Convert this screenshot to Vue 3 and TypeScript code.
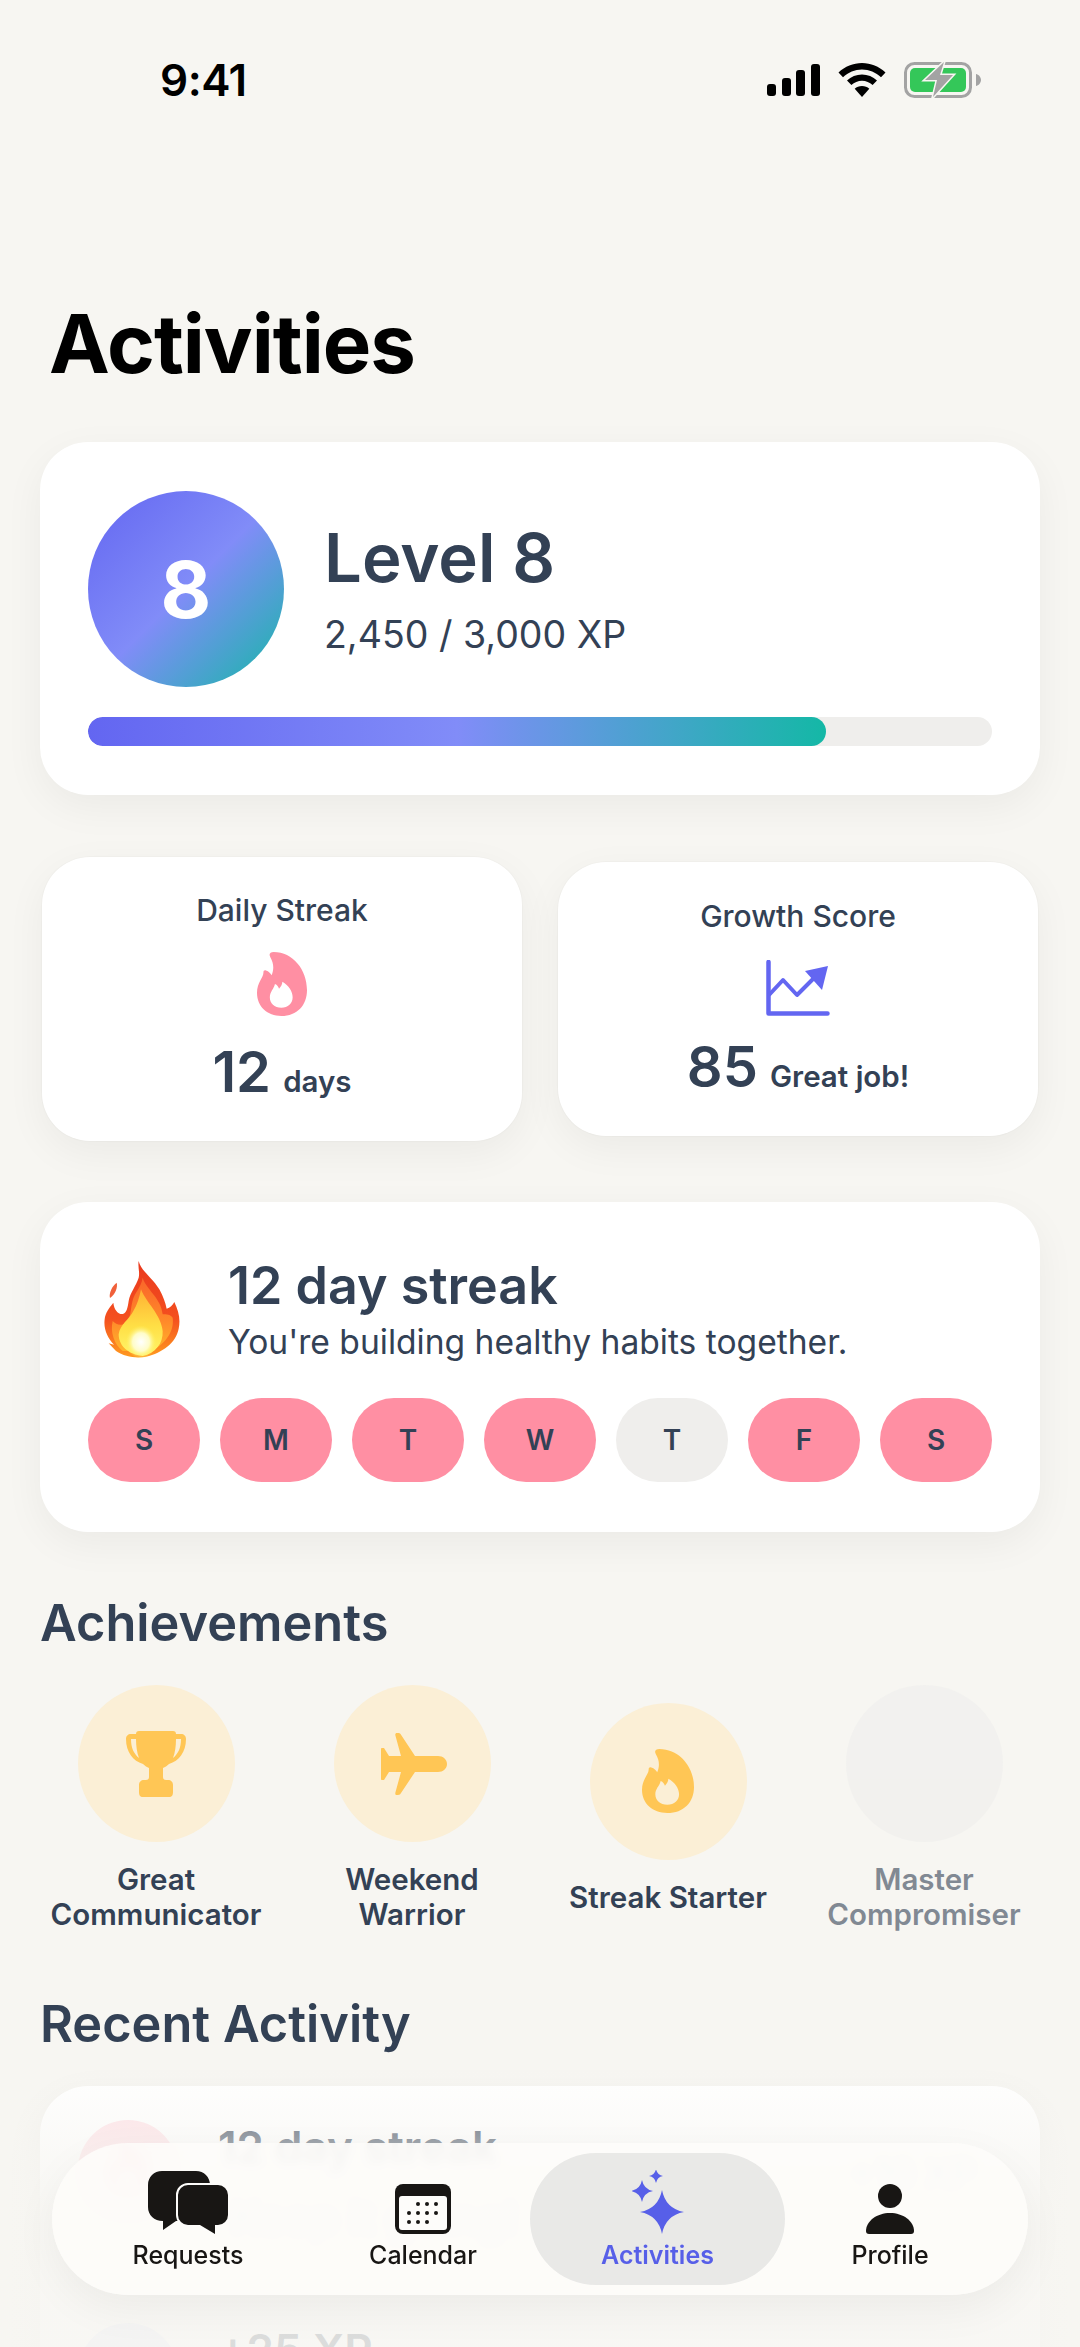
<script setup lang="ts">
interface Achievement {
  name: string[]
  icon: 'trophy' | 'plane' | 'flame' | 'none'
  locked?: boolean
}

const weekDays = [
  { label: 'S', done: true },
  { label: 'M', done: true },
  { label: 'T', done: true },
  { label: 'W', done: true },
  { label: 'T', done: false },
  { label: 'F', done: true },
  { label: 'S', done: true },
]

const achievements: Achievement[] = [
  { name: ['Great', 'Communicator'], icon: 'trophy' },
  { name: ['Weekend', 'Warrior'], icon: 'plane' },
  { name: ['Streak Starter'], icon: 'flame' },
  { name: ['Master', 'Compromiser'], icon: 'none', locked: true },
]

const flamePath =
  'M13 1c-1.4 0-2 .9-1.3 2.2 1.2 2.3 1.6 4.8.5 7.6-.5-.9-1.1-1.6-2.2-2-.7-.2-1 .2-1 .8.1 2-2.5 4.2-2.5 8.6C6.500 24 10.500 28 16 28c6.200 0 10-4.600 10-11C26 8.500 20.500 1 13 1Zm3 23.500c-2.700 0-4.500-1.900-4.500-4.400 0-2.400 1.600-3.500 2-5.600.9.400 1.300 1.100 1.600 2 .8-1 1.200-1.900 1.300-3 2.500 1.700 4 4 4 6.600 0 2.500-1.800 4.400-4.400 4.400Z'

// four-pointed star with concave sides, used by the Activities tab
function star(cx: number, cy: number, r: number): string {
  const k = r * 0.16
  return (
    `M${cx} ${cy - r}Q${cx + k} ${cy - k} ${cx + r} ${cy}` +
    `Q${cx + k} ${cy + k} ${cx} ${cy + r}` +
    `Q${cx - k} ${cy + k} ${cx - r} ${cy}` +
    `Q${cx - k} ${cy - k} ${cx} ${cy - r}Z`
  )
}
</script>

<template>
  <div class="screen">
    <div class="status-bar">
      <span class="clock">9:41</span>
      <div class="status-icons">
        <svg width="53" height="32" viewBox="0 0 53 32">
          <rect x="0" y="20" width="9" height="12" rx="3" />
          <rect x="15" y="14" width="9" height="18" rx="3" />
          <rect x="29" y="6" width="9" height="26" rx="3" />
          <rect x="44" y="0" width="9" height="32" rx="3" />
        </svg>
        <svg width="48" height="34" viewBox="0 0 48 34">
          <path d="M24 0c8.800 0 17 3.400 23.500 9.500L43 14.200C37.800 9.200 31.200 6.400 24 6.400S10.200 9.200 5 14.200L.5 9.500C7 3.400 15.200 0 24 0Z" />
          <path d="M24 11.500c5.700 0 10.900 2.200 15 6l-4.400 4.600c-2.900-2.700-6.600-4.300-10.600-4.300s-7.700 1.600-10.600 4.300L9 17.500c4.100-3.800 9.300-6 15-6Z" />
          <path d="M24 23c2.800 0 5.400 1 7.300 2.800L24 34l-7.300-8.200C18.600 24 21.200 23 24 23Z" />
        </svg>
        <svg width="77" height="36" viewBox="0 0 77 36">
          <rect x="1.500" y="1.500" width="65" height="33" rx="9" fill="none" stroke="#a3a3a3" stroke-width="3" />
          <path d="M72 12c2.500.6 5 3 5 6s-2.500 5.400-5 6Z" fill="#a3a3a3" />
          <rect x="6" y="6" width="56" height="24" rx="5" fill="#34c759" />
          <path d="M40 0 21 18h12l-4 17 20-22H36Z" fill="#a3a3a3" stroke="#f7f6f2" stroke-width="3" paint-order="stroke" />
        </svg>
      </div>
    </div>

    <h1 class="page-title">Activities</h1>

    <section class="card level-card">
      <div class="level-head">
        <div class="level-badge">8</div>
        <div class="level-text">
          <div class="level-name">Level 8</div>
          <div class="level-xp">2,450 / 3,000 XP</div>
        </div>
      </div>
      <div class="progress">
        <div class="progress-fill" :style="{ width: `${(2450 / 3000) * 100}%` }"></div>
      </div>
    </section>

    <div class="stat-row">
      <section class="card stat-card stat-streak">
        <div class="stat-label">Daily Streak</div>
        <svg class="stat-icon" width="50" height="64" viewBox="6.500 1 19.500 27" preserveAspectRatio="none">
          <path :d="flamePath" fill="#ff8fa3" fill-rule="evenodd" />
        </svg>
        <div class="stat-value">12 <small>days</small></div>
      </section>
      <section class="card stat-card stat-growth">
        <div class="stat-label">Growth Score</div>
        <svg class="stat-icon" width="64" height="56" viewBox="0 0 64 56" fill="none">
          <path d="M2.500 2v51.500h59" stroke="#6366f1" stroke-width="4.500" stroke-linecap="round" stroke-linejoin="round" />
          <path d="M3 35l14-15 14 15 17-17" stroke="#6366f1" stroke-width="4" stroke-linejoin="round" />
          <path d="M39 11 62 6l-6 24Z" fill="#6366f1" />
        </svg>
        <div class="stat-value">85 <small>Great job!</small></div>
      </section>
    </div>

    <section class="card streak-card">
      <div class="streak-head">
        <svg class="fire" width="80" height="98" viewBox="72 62 232 294">
          <defs>
            <linearGradient id="fireOuter" x1="0" y1="0" x2="0" y2="1">
              <stop offset="0" stop-color="#e9381d" />
              <stop offset=".6" stop-color="#f4501f" />
              <stop offset="1" stop-color="#ff9a1f" />
            </linearGradient>
            <linearGradient id="fireMid" x1="0" y1="0" x2="0" y2="1">
              <stop offset="0" stop-color="#f9642a" />
              <stop offset=".6" stop-color="#ff8a2a" />
              <stop offset="1" stop-color="#ffb52b" />
            </linearGradient>
            <linearGradient id="fireInner" x1="0" y1="0" x2="0" y2="1">
              <stop offset="0" stop-color="#ffb033" />
              <stop offset=".55" stop-color="#ffdf45" />
              <stop offset="1" stop-color="#fff56a" />
            </linearGradient>
            <radialGradient id="fireCore">
              <stop offset="0" stop-color="#ffffff" />
              <stop offset=".55" stop-color="#fffcc8" />
              <stop offset="1" stop-color="#fff15c" stop-opacity="0" />
            </radialGradient>
          </defs>
          <path d="M112 130c4 14-4 34-20 46-4-14 6-36 20-46Z" fill="#f0603a" />
          <path d="M178 65C185 95 215 110 240 150 252 172 258 190 262 208 272 205 280 198 285 188 298 215 304 240 298 268 290 310 250 340 200 352 170 358 135 352 110 335L88 312 104 316C85 295 72 270 76 240 78 220 90 205 102 190 104 210 115 225 130 224 142 222 145 205 148 185 152 160 170 140 178 115 182 98 175 82 178 65Z" fill="url(#fireOuter)" />
          <path d="M190 115C200 150 245 175 250 225 262 225 272 225 280 235 285 270 265 310 215 335L130 335C105 315 92 280 100 245 110 255 125 262 140 250 160 235 150 190 170 160 180 145 188 130 190 115Z" fill="url(#fireMid)" />
          <path d="M185 150C200 190 245 225 250 275 252 312 228 342 190 350 148 346 118 320 118 285 122 255 150 240 162 215 174 195 180 175 185 150Z" fill="url(#fireInner)" />
          <ellipse cx="185" cy="308" rx="46" ry="50" fill="url(#fireCore)" />
        </svg>
        <div>
          <div class="streak-title">12 day streak</div>
          <div class="streak-sub">You're building healthy habits together.</div>
        </div>
      </div>
      <div class="week">
        <div v-for="(day, i) in weekDays" :key="i" class="day" :class="{ done: day.done }">{{ day.label }}</div>
      </div>
    </section>

    <h2 class="section-title achievements-title">Achievements</h2>
    <div class="achievements">
      <div v-for="item in achievements" :key="item.name[0]" class="achievement" :class="{ locked: item.locked }">
        <div class="medal">
          <svg v-if="item.icon === 'trophy'" width="60" height="66" viewBox="0 0 60 66">
            <path d="M13 0h34c2 0 3 1 3 3h5c3 0 5 2 5 5 0 13-7 22-17 25-2 2-4 3-6 4v9c0 2 1 3 3 3h2c3 0 5 2 5 5v7c0 3-1 5-4 5H17c-3 0-4-2-4-5v-7c0-3 2-5 5-5h2c2 0 3-1 3-3v-9c-2-1-4-2-6-4C7 30 0 21 0 8c0-3 2-5 5-5h5c0-2 1-3 3-3Zm-8 8c0 9 3 15 8 19-2-5-3-12-3-19H5Zm50 0h-5c0 7-1 14-3 19 5-4 8-10 8-19Z" fill="#ffc655" fill-rule="evenodd" />
          </svg>
          <svg v-else-if="item.icon === 'plane'" class="plane" width="68" height="62" viewBox="0 0 66 62">
            <path d="M17 0c1.500 0 2.500.6 3 1.800L34 23h23c5 0 9 3.500 9 8s-4 8-9 8H34L20 60c-.5 1.200-1.500 2-3 2h-1c-1.500 0-2-1-1.600-2.500L20 39H8l-5 8H1c-.700 0-1-.5-1-1V16c0-.5.3-1 1-1h2l5 8h12L14.400 2.500C14 1 14.500 0 16 0h1Z" fill="#ffc655" />
          </svg>
          <svg v-else-if="item.icon === 'flame'" width="52" height="64" viewBox="6.500 1 19.500 27" preserveAspectRatio="none">
            <path :d="flamePath" fill="#ffc655" fill-rule="evenodd" />
          </svg>
        </div>
        <div class="achievement-name">
          <div v-for="line in item.name" :key="line">{{ line }}</div>
        </div>
      </div>
    </div>

    <h2 class="section-title">Recent Activity</h2>
    <section class="card activity-card">
      <div class="activity-row">
        <div class="activity-dot pink">
          <svg width="40" height="50" viewBox="6.500 1 19.500 27" preserveAspectRatio="none"><path :d="flamePath" fill="#ff8fa3" fill-rule="evenodd" /></svg>
        </div>
        <div class="activity-text">
          <div class="activity-title">12 day streak</div>
          <div class="activity-sub">Keep it going!</div>
        </div>
        <div class="activity-time">+10 XP</div>
      </div>
      <div class="activity-row second">
        <div class="activity-dot blue"></div>
        <div class="activity-text">
          <div class="activity-title">+25 XP</div>
        </div>
      </div>
    </section>

    <div class="scroll-fade"></div>

    <nav class="tab-bar">
      <div class="tab">
        <svg width="80" height="63" viewBox="0 0 80 63">
          <path d="M14 0h34c8 0 14 6 14 14v22c0 8-6 14-14 14H28l-13 9V50C6 50 0 44 0 36V14C0 6 6 0 14 0Z" fill="#181614" />
          <path d="M40 14h30a10 10 0 0 1 10 10v20a10 10 0 0 1-10 10h-3v9l-15-9H40a10 10 0 0 1-10-10V24a10 10 0 0 1 10-10Z" fill="#181614" stroke="#fdfcfa" stroke-width="4" paint-order="stroke" />
        </svg>
        <span>Requests</span>
      </div>
      <div class="tab">
        <svg width="56" height="50" viewBox="0 0 56 50">
          <rect x="0" y="0" width="56" height="50" rx="8" fill="#181614" />
          <rect x="4" y="12" width="48" height="34" rx="3" fill="#fdfcfa" />
          <g fill="#181614">
            <circle cx="23" cy="20" r="2" /><circle cx="32" cy="20" r="2" /><circle cx="41" cy="20" r="2" />
            <circle cx="14" cy="29" r="2" /><circle cx="23" cy="29" r="2" /><circle cx="32" cy="29" r="2" /><circle cx="41" cy="29" r="2" />
            <circle cx="14" cy="38" r="2" /><circle cx="23" cy="38" r="2" /><circle cx="32" cy="38" r="2" />
          </g>
        </svg>
        <span>Calendar</span>
      </div>
      <div class="tab active">
        <svg width="52" height="64" viewBox="0 0 52 64" fill="#575fe8">
          <path :d="star(30, 42, 22)" />
          <path :d="star(10, 21, 11)" />
          <path :d="star(24, 6, 7)" />
        </svg>
        <span>Activities</span>
      </div>
      <div class="tab">
        <svg width="48" height="50" viewBox="0 0 48 50" fill="#181614">
          <circle cx="24" cy="12" r="12" />
          <path d="M24 29C37 29 48 37 48 47c0 2-1 3-3 3H3c-2 0-3-1-3-3C0 37 11 29 24 29Z" />
        </svg>
        <span>Profile</span>
      </div>
    </nav>
  </div>
</template>

<style>
html,
body {
  margin: 0;
  background: #f7f6f2;
}
</style>

<style scoped>
.screen {
  position: relative;
  width: 1080px;
  height: 2347px;
  overflow: hidden;
  background: #f7f6f2;
  font-family: Inter, "Noto Sans", sans-serif;
  color: #334155;
}

.status-bar {
  display: flex;
  justify-content: space-between;
  align-items: center;
  height: 48px;
  padding: 56px 99px 0 160px;
}

.clock {
  font-size: 44px;
  font-weight: 600;
  color: #000;
  letter-spacing: -0.5px;
}

.status-icons {
  display: flex;
  align-items: center;
  gap: 18px;
}

.page-title {
  margin: 194px 0 0 49px;
  font-size: 81.500px;
  line-height: 92px;
  font-weight: 700;
  color: #000;
  letter-spacing: -1px;
}

.card {
  background: #fff;
  border-radius: 48px;
  box-shadow: 0 12px 40px rgba(0, 0, 0, 0.05);
}

.level-card {
  margin: 52px 40px 0;
  padding: 49px 48px;
  height: 353px;
  box-sizing: border-box;
}

.level-head {
  display: flex;
  align-items: center;
  gap: 40px;
}

.level-badge {
  display: flex;
  align-items: center;
  justify-content: center;
  width: 196px;
  height: 196px;
  border-radius: 50%;
  background: linear-gradient(135deg, #6366f1 0%, #818cf8 50%, #14b8a6 100%);
  color: #fff;
  font-size: 78px;
  font-weight: 700;
}

.level-name {
  font-size: 67px;
  line-height: 76px;
  font-weight: 600;
}

.level-xp {
  margin-top: 16px;
  font-size: 37.500px;
  line-height: 46px;
}

.progress {
  margin-top: 30px;
  height: 29px;
  border-radius: 15px;
  background: #efeeec;
  overflow: hidden;
}

.progress-fill {
  height: 100%;
  border-radius: 15px;
  background: linear-gradient(90deg, #6366f1 0%, #818cf8 50%, #14b8a6 100%);
}

.stat-row {
  display: flex;
  align-items: center;
  gap: 36px;
  margin: 62px 42px 0;
}

.stat-card {
  display: flex;
  flex-direction: column;
  align-items: center;
  flex: 1;
  box-sizing: border-box;
  box-shadow: 0 12px 40px rgba(0, 0, 0, 0.05), 0 0 0 1px rgba(0, 0, 0, 0.015);
}

.stat-streak {
  height: 284px;
  padding-top: 35px;
}

.stat-growth {
  height: 274px;
  padding-top: 36px;
}

.stat-label {
  font-size: 30px;
  line-height: 36px;
  font-weight: 500;
}

.stat-streak .stat-icon {
  margin-top: 24px;
}

.stat-growth .stat-icon {
  margin-top: 26px;
}

.stat-value {
  margin-top: 20px;
  font-size: 56px;
  line-height: 66px;
  font-weight: 600;
}

.stat-streak .stat-value {
  margin-top: 23px;
}

.stat-growth .stat-value {
  margin-top: 18px;
}

.stat-value small {
  margin-left: -2px;
  font-size: 29.500px;
  font-weight: 600;
}

.streak-card {
  margin: 61px 40px 0;
  padding: 53px 48px 0;
  height: 330px;
  box-sizing: border-box;
}

.streak-head {
  display: flex;
  align-items: center;
  gap: 46px;
  padding-left: 14px;
}

.fire {
  flex: none;
}

.streak-title {
  font-size: 52px;
  line-height: 62px;
  font-weight: 600;
}

.streak-sub {
  margin-top: 4px;
  font-size: 33.600px;
  line-height: 42px;
}

.week {
  display: flex;
  gap: 20px;
  margin-top: 35px;
}

.day {
  display: flex;
  align-items: center;
  justify-content: center;
  width: 112px;
  height: 84px;
  border-radius: 42px;
  background: #efeeec;
  font-size: 28px;
  font-weight: 600;
}

.day.done {
  background: #ff8fa3;
}

.section-title {
  margin: 0 0 0 40px;
  font-size: 50.500px;
  line-height: 60px;
  font-weight: 600;
}

.achievements-title {
  margin-top: 61px;
}

.achievements {
  display: grid;
  grid-template-columns: repeat(4, 256px);
  align-items: center;
  height: 247px;
  margin: 32px 0 62px;
  padding-left: 28px;
}

.achievement {
  display: flex;
  flex-direction: column;
  align-items: center;
}

.medal {
  display: flex;
  align-items: center;
  justify-content: center;
  width: 157px;
  height: 157px;
  border-radius: 50%;
  background: #fbefd6;
}

.plane {
  margin-left: 4px;
}

.achievement-name {
  margin-top: 20px;
  font-size: 29.500px;
  line-height: 35px;
  font-weight: 600;
  text-align: center;
}

.locked {
  opacity: 0.6;
}

.locked .medal {
  background: #efefed;
}

.activity-card {
  margin: 32px 40px 0;
  padding: 34px 48px 0 38px;
  height: 420px;
  box-sizing: border-box;
}

.activity-row {
  display: flex;
  align-items: flex-start;
  gap: 40px;
}

.activity-row.second {
  margin-top: 79px;
}

.activity-dot {
  display: flex;
  align-items: center;
  justify-content: center;
  flex: none;
  width: 100px;
  height: 100px;
  border-radius: 50%;
}

.activity-dot.pink {
  background: #ffdfe5;
}

.activity-dot.blue {
  background: #e3e8fb;
}

.activity-text {
  flex: 1;
}

.activity-title {
  font-size: 44px;
  line-height: 54px;
  font-weight: 600;
}

.activity-sub {
  margin-top: 16px;
  margin-left: 13px;
  font-size: 44px;
  line-height: 54px;
  color: #5b7bb5;
}

.activity-time {
  margin: 30px 17px 0 0;
  font-size: 38px;
  color: #8aa0c8;
}

.scroll-fade {
  position: absolute;
  left: 0;
  right: 0;
  top: 2060px;
  bottom: 0;
  background: linear-gradient(180deg, rgba(247, 246, 242, 0) 0, rgba(247, 246, 242, 0.6) 90px, rgba(247, 246, 242, 0.86) 150px);
}

.tab-bar {
  position: absolute;
  left: 52px;
  top: 2143px;
  display: grid;
  grid-template-columns: 272px 206px 255px 210px;
  align-items: center;
  width: 976px;
  height: 152px;
  box-sizing: border-box;
  border-radius: 76px;
  background: rgba(253, 252, 250, 0.9);
  -webkit-backdrop-filter: blur(5px);
  backdrop-filter: blur(5px);
  box-shadow: 0 14px 44px rgba(0, 0, 0, 0.05);
}

.tab {
  display: flex;
  flex-direction: column;
  align-items: center;
  justify-content: flex-end;
  height: 132px;
  padding-bottom: 15px;
  box-sizing: border-box;
  gap: 6px;
  font-size: 25px;
  line-height: 30px;
  font-weight: 500;
  color: #181614;
}

.tab:nth-child(2) {
  padding-right: 8px;
}

.tab.active {
  border-radius: 66px;
  background: #e9e9e7;
  color: #575fe8;
  font-weight: 600;
}
</style>
